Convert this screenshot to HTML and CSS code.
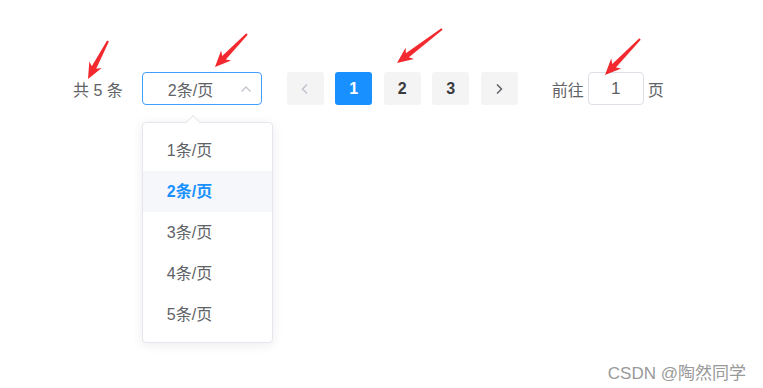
FILE: index.html
```html
<!DOCTYPE html>
<html lang="zh-CN">

<head>
    <meta charset="UTF-8">
    <meta name="viewport" content="width=device-width, initial-scale=1.0">
    <title>分页</title>
    <link rel="stylesheet" href="styles.css">
</head>

<body>
    <div class="pager">
        <span class="total">共 5 条</span>

        <!-- 每页条数 -->
        <div class="sizes">
            <div class="select">
                <span class="select-text">2条/页</span>
                <svg class="select-arrow" width="12" height="8" viewBox="0 0 12 8">
                    <path d="M1.5 6.5 L6 2 L10.5 6.5" fill="none" stroke="#c0c4cc" stroke-width="1.3" />
                </svg>
            </div>
            <div class="dropdown">
                <span class="popper-arrow"></span>
                <ul class="options">
                    <li>1条/页</li>
                    <li class="selected">2条/页</li>
                    <li>3条/页</li>
                    <li>4条/页</li>
                    <li>5条/页</li>
                </ul>
            </div>
        </div>

        <div class="pages">
            <button class="page-btn">
                <svg width="10" height="12" viewBox="0 0 10 12">
                    <path d="M7 1.5 L2.5 6 L7 10.5" fill="none" stroke="#c0c4cc" stroke-width="1.5" />
                </svg>
            </button>
            <button class="page-btn active">1</button>
            <button class="page-btn">2</button>
            <button class="page-btn">3</button>
            <button class="page-btn">
                <svg width="10" height="12" viewBox="0 0 10 12">
                    <path d="M3 1.5 L7.5 6 L3 10.5" fill="none" stroke="#606266" stroke-width="1.5" />
                </svg>
            </button>
        </div>

        <div class="jumper">
            <span>前往</span>
            <input class="jump-input" type="text" value="1">
            <span>页</span>
        </div>
    </div>

    <!-- 标注箭头 -->
    <svg class="marks" width="763" height="388" viewBox="0 0 763 388">
        <g fill="#f2292e">
            <path d="M88 79 L101.7 68.1 L96.2 68.7 L108.9 41.5 L107.1 40.5 L91.8 66.3 L89.3 61.5 Z" />
            <path d="M215 67 L231.1 60.4 L225.8 59.4 L247.7 34.7 L246.3 33.3 L222.2 56 L221.1 50.6 Z" />
            <path d="M397 63 L414 59 L408.9 57.2 L442.6 29.8 L441.4 28.2 L405.9 53.2 L405.6 47.8 Z" />
            <path d="M605 75 L621.2 68.4 L615.9 67.4 L640.7 39.7 L639.3 38.3 L612.3 64 L611.2 58.6 Z" />
        </g>
    </svg>

    <div class="watermark">CSDN @陶然同学</div>
</body>

</html>
```

FILE: styles.css
```css
body {
    margin: 0;
    padding: 0;
    font-family: 'Liberation Sans', 'Noto Sans CJK SC', sans-serif;
    color: #606266;
    background: #fff;
    width: 763px;
    height: 388px;
    position: relative;
    overflow: hidden;
}

.pager {
    display: flex;
    align-items: center;
    padding: 72px 0 0 73px;
    height: 33px;
    font-size: 16px;
}

.total {
    margin-right: 19px;
}

/* 下拉框 */
.sizes {
    position: relative;
}

.select {
    box-sizing: border-box;
    width: 120px;
    height: 33px;
    border: 1px solid #409eff;
    border-radius: 4px;
    display: flex;
    align-items: center;
    padding: 0 9px 0 25px;
}

.select-text {
    flex: 1;
}

.select-arrow {
    display: block;
}

.dropdown {
    position: absolute;
    top: 50px;
    left: 0;
    width: 131px;
    box-sizing: border-box;
    background: #fff;
    border: 1px solid #e4e7ed;
    border-radius: 4px;
    box-shadow: 0 2px 12px rgba(0, 0, 0, 0.08);
    z-index: 2;
}

.popper-arrow {
    position: absolute;
    top: -6px;
    left: 45px;
    width: 9px;
    height: 9px;
    background: #fff;
    border-left: 1px solid #e4e7ed;
    border-top: 1px solid #e4e7ed;
    transform: rotate(45deg);
}

.options {
    list-style: none;
    margin: 0;
    padding: 7px 0;
    position: relative;
}

.options li {
    height: 41px;
    line-height: 41px;
    padding-left: 24px;
    font-size: 16px;
    color: #606266;
}

.options li.selected {
    background: #f5f7fa;
    color: #1890ff;
    font-weight: bold;
}

/* 页码 */
.pages {
    display: flex;
    gap: 11.5px;
    margin-left: 25px;
}

.page-btn {
    width: 37px;
    height: 33px;
    border: none;
    border-radius: 3px;
    background: #f4f4f5;
    color: #3a3b3d;
    font-family: 'Liberation Sans', sans-serif;
    font-size: 16px;
    font-weight: bold;
    padding: 0;
    display: flex;
    align-items: center;
    justify-content: center;
}

.page-btn.active {
    background: #1890ff;
    color: #fff;
}

/* 跳转 */
.jumper {
    display: flex;
    align-items: center;
    margin-left: 34px;
}

.jump-input {
    box-sizing: border-box;
    width: 56px;
    height: 33px;
    margin: 0 4px;
    border: 1px solid #dcdfe6;
    border-radius: 4px;
    text-align: center;
    font-family: 'Liberation Sans', sans-serif;
    font-size: 17px;
    color: #606266;
    outline: none;
}

.marks {
    position: absolute;
    top: 0;
    left: 0;
    pointer-events: none;
    z-index: 3;
}

.watermark {
    position: absolute;
    right: 17px;
    top: 359px;
    font-size: 17px;
    color: #999;
}
```
